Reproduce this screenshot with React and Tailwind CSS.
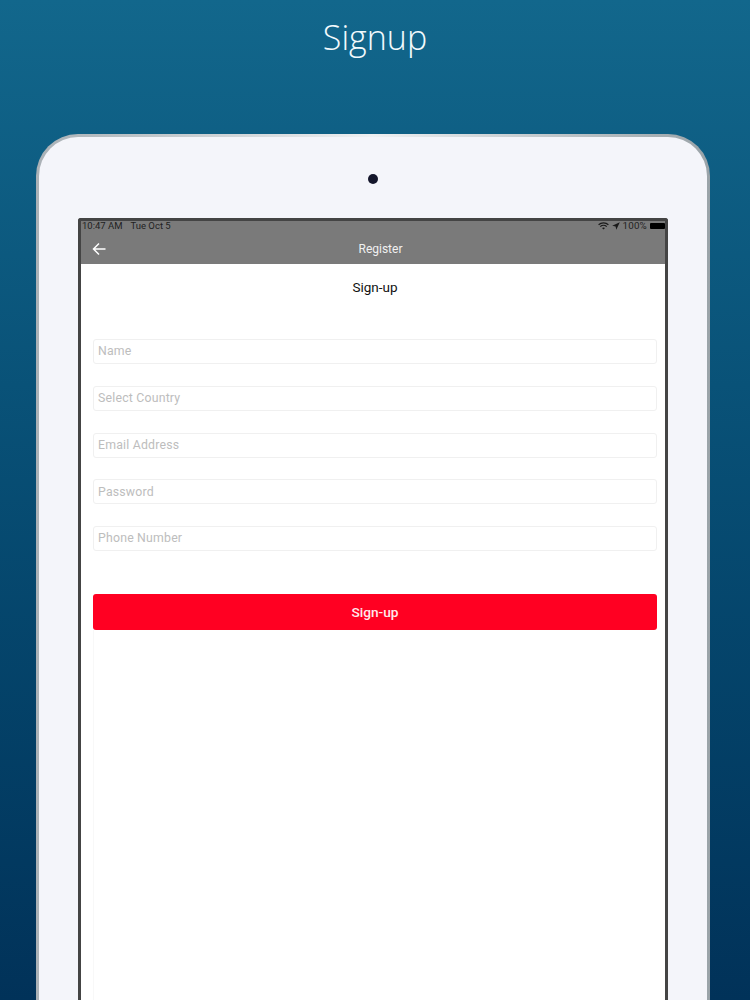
import React from "react";

const fields = ["Name", "Select Country", "Email Address", "Password", "Phone Number"];

function StatusIcons() {
  return (
    <div className="flex items-center">
      {/* wifi */}
      <svg width="11" height="8" viewBox="0 0 11 8" fill="none" stroke="#1a1a1a" strokeWidth="1.2">
        <path d="M0.6 2.8a7 7 0 0 1 9.8 0" />
        <path d="M2.3 4.6a4.6 4.6 0 0 1 6.4 0" />
        <path d="M5.5 7.6 4 6.1a2.2 2.2 0 0 1 3 0z" fill="#1a1a1a" stroke="none" />
      </svg>
      {/* location arrow */}
      <svg width="8" height="8" viewBox="0 0 8 8" className="ml-[3px]">
        <path d="M7.8 0.2 0.2 3.7l3.4 0.7 0.7 3.4z" fill="#1a1a1a" />
      </svg>
      <span className="ml-[3px] text-[9.8px] leading-none text-[#222] tracking-[0.2px]">100%</span>
      {/* battery */}
      <div className="w-[15px] h-[6px] bg-black rounded-[1px] ml-[3px]"></div>
    </div>
  );
}

export default function App() {
  return (
    <div
      className="h-[1000px] w-[750px] overflow-hidden flex flex-col bg-gradient-to-b from-[#12678c] to-[#013259]"
      style={{ fontFamily: "Roboto, sans-serif" }}
    >
      {/* Heading */}
      <div className="h-[134px] shrink-0 pb-[60px] flex items-center justify-center">
        <h1
          className="text-[34px] leading-none font-light text-[#f2fafd]"
          style={{ fontFamily: "'Open Sans', sans-serif" }}
        >
          Signup
        </h1>
      </div>

      {/* Tablet frame */}
      <div className="flex-1 ml-[36px] mr-[40px] rounded-t-[42px] pt-[3px] px-[3px] bg-gradient-to-r from-[#aab1b6] via-[#eef0f2] to-[#9aa3a8] flex flex-col min-h-0">
        <div className="flex-1 rounded-t-[39px] bg-[#f4f5fa] px-[39px] flex flex-col min-h-0">
          <div className="h-[81px] shrink-0 pt-[3px] flex items-center justify-center">
            <div className="w-[10px] h-[10px] rounded-full bg-[#14162b]"></div>
          </div>

          {/* Screen */}
          <div className="flex-1 border-x-[3px] border-t-[3px] border-[#444444] rounded-t-[3px] bg-white flex flex-col min-h-0">
            {/* Nav bar */}
            <div className="h-[43px] shrink-0 bg-[#7a7a7a] flex flex-col">
              <div className="h-[10px] pl-[1px] flex items-center justify-between">
                <div className="flex gap-[8px] text-[9.5px] leading-none text-[#222]">
                  <span>10:47 AM</span>
                  <span>Tue Oct 5</span>
                </div>
                <StatusIcons />
              </div>
              <div className="flex-1 flex items-center pl-[11px] pt-[2px]">
                <svg width="14" height="14" viewBox="0 0 14 14" fill="none" stroke="white" strokeWidth="1.5">
                  <path d="M13.5 7H1.5M7 1.5 1.5 7 7 12.5" />
                </svg>
                <span className="flex-1 text-center text-[12px] text-[#f0f0f0] pr-[10px]">Register</span>
              </div>
            </div>

            {/* Form */}
            <div className="flex-1 pl-[12px] pr-[8px] flex flex-col min-h-0">
              <div className="h-[46px] shrink-0 flex items-center justify-center text-[13.5px] text-[#111]">
                Sign-up
              </div>
              <div className="mt-[29px] flex flex-col gap-[21.75px]">
                {fields.map((label) => (
                  <div
                    key={label}
                    className="h-[25px] border border-[#f0f0f0] rounded-[3px] px-[4px] flex items-center text-[12.3px] text-[#bdbdbd] tracking-[0.2px]"
                  >
                    {label}
                  </div>
                ))}
              </div>
              <button className="mt-[43px] h-[36px] shrink-0 w-full bg-[#ff0022] rounded-[3px] text-[13.7px] font-medium text-[#ffe9ec]">
                Sign-up
              </button>
              <div className="flex-1 border-l border-[#f8f8f8]"></div>
            </div>
          </div>
        </div>
      </div>
    </div>
  );
}
